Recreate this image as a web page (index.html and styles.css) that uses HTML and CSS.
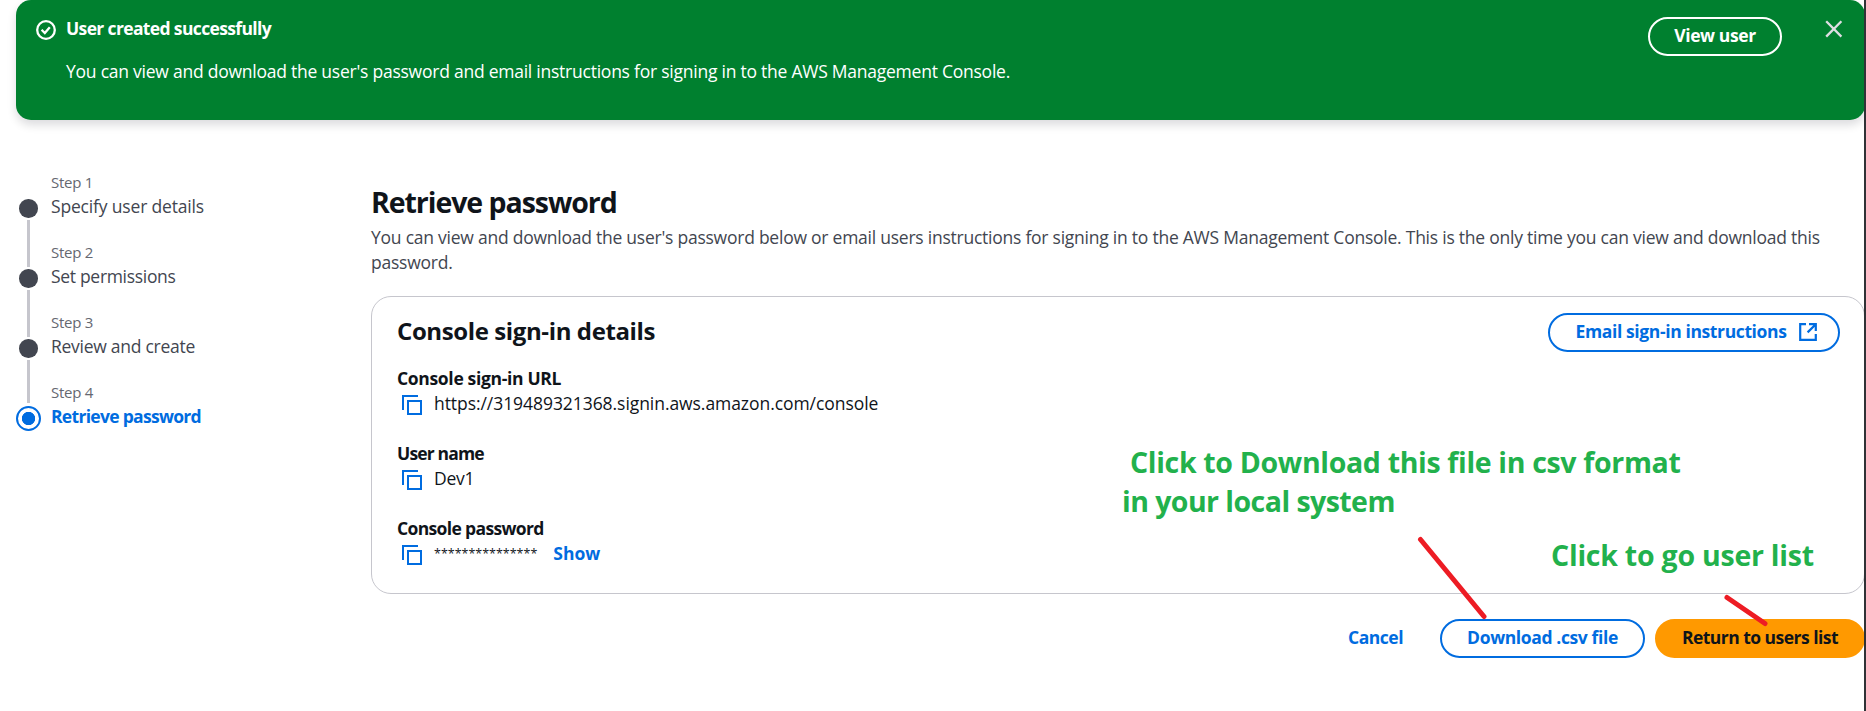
FILE: index.html
```
<!DOCTYPE html>
<html lang="en">
<head>
<meta charset="utf-8">
<title>Retrieve password</title>
<link rel="stylesheet" href="styles.css">
</head>
<body>
<svg class="sprite" width="0" height="0">
  <symbol id="copy" viewBox="0 0 20 20"><path d="M1 15V1H16M6 6H19V19H6Z" fill="none" stroke="currentColor" stroke-width="2"/></symbol>
</svg>
<div class="page">
  <section class="flash">
    <svg class="flash-icon" width="20" height="20" viewBox="0 0 20 20" fill="none" stroke="#fff" stroke-width="2.3"><circle cx="10" cy="10" r="8.8"/><path d="M5.6 9.8l3.2 3.2 5-5.8"/></svg>
    <div class="flash-text">
      <h2 class="flash-title">User created successfully</h2>
      <p class="flash-body">You can view and download the user's password and email instructions for signing in to the AWS Management Console.</p>
    </div>
    <button class="btn btn-flash">View user</button>
    <svg class="close" width="18" height="18" viewBox="0 0 18 18" fill="none" stroke="#dedee3" stroke-width="2.3"><path d="M1.2 1.2l15.2 15.4M16.4 1.2L1.2 16.6"/></svg>
  </section>

  <div class="layout">
    <ol class="steps">
      <li class="step"><span class="dot"></span><span class="line"></span><small>Step 1</small><span class="name">Specify user details</span></li>
      <li class="step"><span class="dot"></span><span class="line"></span><small>Step 2</small><span class="name name-perm">Set permissions</span></li>
      <li class="step"><span class="dot"></span><span class="line line-last"></span><small>Step 3</small><span class="name name-review">Review and create</span></li>
      <li class="step current"><span class="dot"></span><small>Step 4</small><span class="name">Retrieve password</span></li>
    </ol>

    <main class="content">
      <h1>Retrieve password</h1>
      <p class="description">You can view and download the user's password below or email users instructions for signing in to the AWS Management Console. This is the only time you can view and download this password.</p>

      <section class="card">
        <header class="card-head">
          <h2>Console sign-in details</h2>
          <button class="btn btn-email">Email sign-in instructions
            <svg width="18" height="18" viewBox="0 0 18 18" fill="none" stroke="currentColor" stroke-width="2.2"><path d="M7 1.2H1.2V16.8H16.8V11M10 1.2H16.8V8M16.8 1.2L8.6 9.4"/></svg>
          </button>
        </header>
        <dl class="fields">
          <div class="field"><dt class="ls-url">Console sign-in URL</dt><dd><svg class="copy" width="20" height="20"><use href="#copy"/></svg><span class="url">https://319489321368.signin.aws.amazon.com/console</span></dd></div>
          <div class="field"><dt class="ls-user">User name</dt><dd><svg class="copy" width="20" height="20"><use href="#copy"/></svg><span>Dev1</span></dd></div>
          <div class="field"><dt>Console password</dt><dd><svg class="copy" width="20" height="20"><use href="#copy"/></svg><span class="masked">***************</span><a class="show">Show</a></dd></div>
        </dl>
      </section>

      <footer class="actions">
        <a class="cancel">Cancel</a>
        <button class="btn btn-download">Download .csv file</button>
        <button class="btn btn-primary">Return to users list</button>
      </footer>
    </main>
  </div>

  <div class="edge"></div>
  <div class="note note-download"><div class="note-first">Click to Download this file in csv format</div><div class="note-second">in your local system</div></div>
  <div class="note note-return">Click to go user list</div>
  <svg class="marks" width="1866" height="711" fill="none" stroke="#ed1c24" stroke-width="5" stroke-linecap="round"><path d="M1420.5 539.5L1484 616.500M1727 597.500L1765 623.5"/></svg>
</div>
</body>
</html>
```
FILE: styles.css
```
* { box-sizing: border-box; }
body {
  margin: 0;
  background: #fff;
  color: #0f141a;
  font: 17.5px/25px "Open Sans", "Noto Sans", sans-serif;
  letter-spacing: -0.24px;
}
h1, h2, p, ol, dl, dd { margin: 0; padding: 0; }
.sprite { position: absolute; }
.page { position: relative; width: 1866px; height: 711px; overflow: hidden; }

.flash {
  display: flex;
  align-items: flex-start;
  width: 1849px;
  height: 120px;
  margin-left: 16px;
  padding: 16px 22px 0 20px;
  border-radius: 15px;
  background: #00802f;
  color: #fff;
  box-shadow: 0 5px 10px rgba(0, 7, 22, .14);
}
.flash-icon { margin-top: 4px; }
.flash-text { flex: 1; padding-left: 10px; }
.flash-title { font-size: 17.5px; letter-spacing: -0.64px; }
.flash-body { margin-top: 18px; }
.close { margin: 4px 0 0 43px; }

.btn {
  display: flex;
  align-items: center;
  justify-content: center;
  height: 39px;
  padding: 0 0 2px;
  border: 2px solid #006ce0;
  border-radius: 20px;
  background: #fff;
  color: #006ce0;
  font: 700 17.5px/25px "Open Sans", "Noto Sans", sans-serif;
  letter-spacing: -0.38px;
  white-space: nowrap;
}
.btn-flash { width: 134px; margin-top: 1px; border-color: #fff; background: transparent; color: #fff; }
.btn-email { width: 292px; padding-left: 5px; gap: 13px; }
.btn-download { width: 205px; }
.btn-primary { width: 210px; margin-left: 10px; border-color: #f90; background: #f90; color: #0f141a; letter-spacing: -0.53px; }

.layout { display: flex; }
.steps { width: 371px; padding: 52px 0 0 51px; list-style: none; }
.step { position: relative; height: 70px; }
.step small { display: block; margin-bottom: 2px; color: #656871; font-size: 15px; line-height: 20px; }
.name { display: block; color: #424650; letter-spacing: -0.17px; }
.name-perm { letter-spacing: -0.31px; }
.name-review { letter-spacing: -0.27px; }
.dot { position: absolute; left: -32px; top: 27px; width: 18.5px; height: 18.5px; border-radius: 50%; background: #424650; }
.line { position: absolute; left: -24px; top: 48px; width: 3px; height: 47px; background: #c6c6cd; }
.line-last { height: 43px; }
.current .name { color: #006ce0; font-weight: 700; letter-spacing: -0.7px; }
.current .dot { left: -35px; top: 24px; width: 25px; height: 25px; border: 2px solid #006ce0; background: radial-gradient(circle, #006ce0 6.3px, #fff 7px); }

.content { width: 1494px; padding-top: 64px; }
h1 { font-size: 28.5px; line-height: 37px; letter-spacing: -1.05px; }
.description { margin-top: 4px; padding-right: 30px; color: #424650; }
.card { height: 298px; margin-top: 21px; padding: 16px 24px 0 25px; border: 1px solid #c6c6cd; border-radius: 20px; }
.card-head { display: flex; align-items: flex-start; justify-content: space-between; }
.card-head h2 { margin-top: 3px; font-size: 24px; line-height: 30px; letter-spacing: -0.39px; }
.fields { display: grid; gap: 25px; margin-top: 14px; }
dt { font-weight: 700; letter-spacing: -0.65px; }
.ls-url { letter-spacing: -0.33px; }
.ls-user { letter-spacing: -0.85px; }
dd { display: flex; }
.copy { margin: 4px 12px 0 5px; color: #006ce0; }
.url { letter-spacing: -0.06px; }
.masked { font-size: 12.5px; letter-spacing: 0; }
.show { margin-left: 16px; color: #006ce0; font-weight: 700; letter-spacing: 0; }

.actions { display: flex; align-items: center; justify-content: flex-end; margin-top: 25px; }
.cancel { margin-right: 37px; padding-bottom: 2px; color: #006ce0; font-weight: 700; letter-spacing: -0.48px; }

.edge { position: absolute; top: 0; right: 0; width: 2px; height: 711px; background: #303236; }
.note { position: absolute; color: #22b14c; font-size: 28.5px; font-weight: 700; line-height: 39px; white-space: nowrap; }
.note-download { left: 1122px; top: 443px; }
.note-first { padding-left: 8px; letter-spacing: -0.33px; }
.note-second { letter-spacing: -0.55px; }
.note-return { left: 1551px; top: 536px; letter-spacing: -0.24px; }
.marks { position: absolute; left: 0; top: 0; }
```
